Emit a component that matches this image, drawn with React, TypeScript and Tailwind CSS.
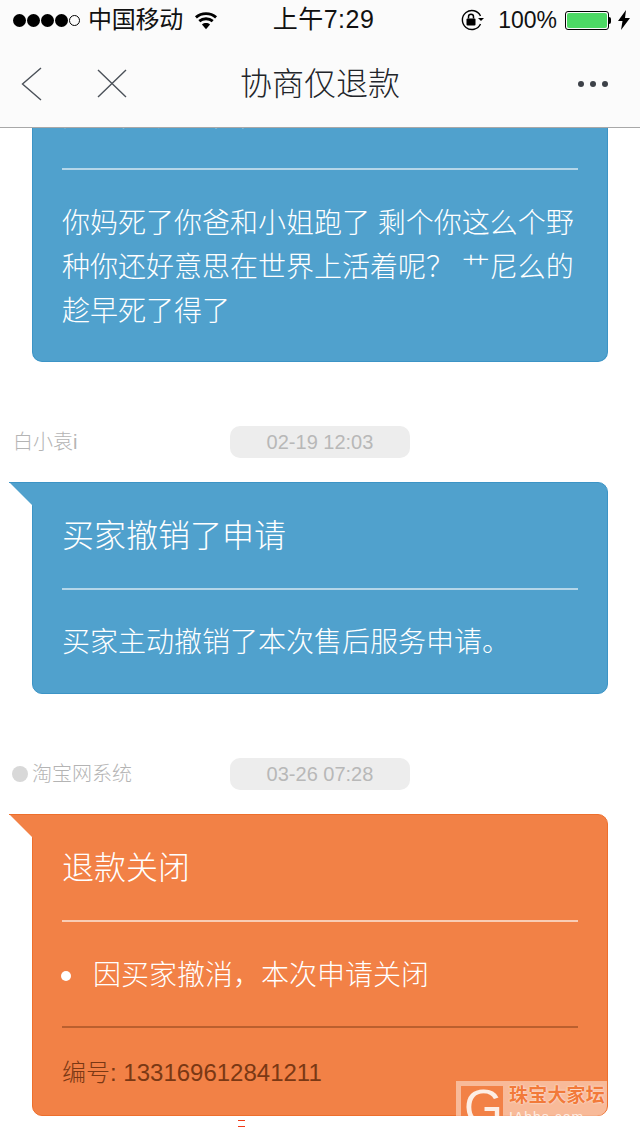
const font = "font-['Liberation_Sans','Noto_Sans_CJK_SC',sans-serif]";

function StatusBar() {
  return (
    <div className="flex h-10 items-center justify-between pl-[13px] pr-[10px] text-[24px] text-[#111]">
      <div className="flex w-[224px] items-center">
        <div className="flex items-center gap-[1px]">
          <span className="h-[13px] w-[13px] rounded-full bg-black" />
          <span className="h-[13px] w-[13px] rounded-full bg-black" />
          <span className="h-[13px] w-[13px] rounded-full bg-black" />
          <span className="h-[13px] w-[13px] rounded-full bg-black" />
          <span className="h-[11px] w-[11px] rounded-full border border-black" />
        </div>
        <span className="ml-[8px] tracking-[-0.25px]">中国移动</span>
        <svg className="ml-[11px]" width="24" height="19" viewBox="0 0 25 19">
          <path d="M12.5 18.5 8.3 13.6c2.4-1.9 6-1.9 8.4 0z" fill="#000" />
          <path d="M5.5 10.2c4-3.4 10-3.4 14 0M2 6.2c6-5.2 15-5.2 21 0" fill="none" stroke="#000" strokeWidth="3" />
        </svg>
      </div>
      <span className="text-[25px] tracking-[0.5px]">上午7:29</span>
      <div className="flex w-[220px] items-center justify-end">
        <svg width="24" height="22" viewBox="0 0 24 22">
          <path d="M20.5 7A9.5 9.5 0 1 0 20.5 15" fill="none" stroke="#000" strokeWidth="1.4" />
          <path d="M18 9h6l-3 3z" fill="#000" />
          <rect x="6.5" y="9.5" width="9" height="7" rx="1" fill="#000" />
          <path d="M8.5 9.5V7.8a2.5 2.5 0 0 1 5 0v1.7" fill="none" stroke="#000" strokeWidth="1.5" />
        </svg>
        <span className="ml-[14px] text-[23px]">100%</span>
        <div className="ml-[8px] h-[19px] w-[44px] rounded-[3px] border border-black p-[1px]">
          <div className="h-full w-full rounded-[2px] bg-[#4cd964]" />
        </div>
        <span className="h-[7px] w-[2px] rounded-r-sm bg-black" />
        <svg className="ml-[7px]" width="12" height="20" viewBox="0 0 12 20">
          <path d="M8 0 0 11h4.5L3 20l9-12H7z" fill="#000" />
        </svg>
      </div>
    </div>
  );
}

function NavBar() {
  return (
    <div className="grid h-[88px] grid-cols-[1fr_auto_1fr] items-center border-b border-[#a8a8a8] px-[21px]">
      <div className="flex items-center">
        <svg width="21" height="34" viewBox="0 0 21 34">
          <path d="M20 1 1.5 17 20 33" fill="none" stroke="#4b5159" strokeWidth="1.4" />
        </svg>
        <svg className="ml-[55px]" width="30" height="29" viewBox="0 0 30 29">
          <path d="M1 1l28 27M29 1 1 28" fill="none" stroke="#4b5159" strokeWidth="1.4" />
        </svg>
      </div>
      <div className="text-center text-[32px] font-light leading-none text-[#22252a]">协商仅退款</div>
      <div className="mr-[11px] flex justify-end gap-[6px]">
        <span className="h-[6px] w-[6px] rounded-full bg-[#3d4148]" />
        <span className="h-[6px] w-[6px] rounded-full bg-[#3d4148]" />
        <span className="h-[6px] w-[6px] rounded-full bg-[#3d4148]" />
      </div>
    </div>
  );
}

function MetaRow({ name, time, dot }: { name: string; time: string; dot?: boolean }) {
  return (
    <div className="relative flex h-8 items-center justify-center">
      <div className="absolute left-[12px] top-0 flex h-8 items-center gap-[4px] text-[20px] font-light text-[#b4b4b4]">
        {dot && <span className="h-4 w-4 rounded-full bg-[#d8d8d8]" />}
        <span className={dot ? '' : 'ml-[1px]'}>{name}</span>
      </div>
      <div className="flex h-8 w-[180px] items-center justify-center rounded-[10px] bg-[#ededed] text-[20px] text-[#b8b8b8]">
        {time}
      </div>
    </div>
  );
}

function Tail({ fill, edge }: { fill: string; edge: string }) {
  return (
    <svg className="absolute left-[-24px] top-[-1px]" width="25" height="24" viewBox="0 0 25 24">
      <path d="M0 0H25V24H24z" fill={fill} />
      <path d="M0 .5H25" stroke={edge} />
    </svg>
  );
}

export default function App() {
  return (
    <div className={`h-[1136px] overflow-hidden bg-white ${font}`}>
      <div className="bg-[#fbfbfb]">
        <StatusBar />
        <NavBar />
      </div>

      {/* first bubble, scrolled under the nav bar */}
      <div className="mx-8 h-[234px] overflow-hidden rounded-b-[10px] border border-t-0 border-[#3c94c6] bg-[#50a1cd] px-[29px] font-light text-white">
        <div className="-mt-[27px] h-[67px] text-[28px] leading-[32px]">买家修改了申请</div>
        <div className="border-t-2 border-[#b4d6e9] pt-[32px] text-[28px] leading-[44px]">
          你妈死了你爸和小姐跑了 剩个你这么个野种你还好意思在世界上活着呢？ 艹尼么的 趁早死了得了
        </div>
      </div>

      <div className="mt-[64px]">
        <MetaRow name="白小袁i" time="02-19 12:03" />
      </div>

      <div className="relative mx-8 mt-6 h-[212px] rounded-b-[10px] rounded-tr-[10px] border border-[#3c94c6] bg-[#50a1cd] px-[29px] font-light text-white">
        <Tail fill="#50a1cd" edge="#3c94c6" />
        <div className="flex h-[105px] items-center text-[32px] leading-none">买家撤销了申请</div>
        <div className="border-t-2 border-[#b4d6e9] pt-[31px] text-[28px] leading-[44px]">买家主动撤销了本次售后服务申请。</div>
      </div>

      <div className="mt-[64px]">
        <MetaRow name="淘宝网系统" time="03-26 07:28" dot />
      </div>

      <div className="relative mx-8 mt-6 h-[302px] rounded-b-[10px] rounded-tr-[10px] border border-[#ee6f2c] bg-[#f28146] px-[29px] font-light text-white">
        <Tail fill="#f28146" edge="#ee6f2c" />
        <div className="flex h-[105px] items-center text-[32px] leading-none">退款关闭</div>
        <div className="flex h-[106px] items-center border-t-2 border-[#f9cdb5] pt-[4px] text-[28px]">
          <span className="ml-[-1px] h-[10px] w-[10px] rounded-full bg-white" />
          <span className="ml-[22px]">因买家撤消，本次申请关闭</span>
        </div>
        <div className="flex h-[88px] items-center border-t-2 border-[#bb5f2e] pt-[4px] text-[24px] text-[#7a3814]">
          编号: 133169612841211
        </div>

        {/* forum watermark */}
        <div className="absolute bottom-[-1px] right-0 flex h-[35px] w-[151px] overflow-hidden rounded-br-[10px] bg-white/45 font-normal">
          <div className="ml-[5px] mt-[5px] h-[35px] w-[42px] overflow-hidden bg-[#f28146] pl-[3px] text-[50px] leading-[44px] text-[#fdeee5]">
            G
          </div>
          <div className="ml-[6px] flex flex-col">
            <span className="mt-[3px] text-[19px] font-bold leading-[24px] tracking-[0.2px] text-[#f27a3a] [text-shadow:0_0_2px_#fff]">珠宝大家坛</span>
            <span className="mt-[3px] text-[14px] leading-[12px] tracking-[1px] text-[#fdeee5]">IAbbs.com</span>
          </div>
        </div>
      </div>

      <div className="ml-[238px] mt-[4px] flex w-[8px] flex-col gap-[5px]">
        <span className="h-px w-[7px] bg-[#f03a17]" />
        <span className="h-px w-[7px] bg-[#f03a17]" />
      </div>
    </div>
  );
}
